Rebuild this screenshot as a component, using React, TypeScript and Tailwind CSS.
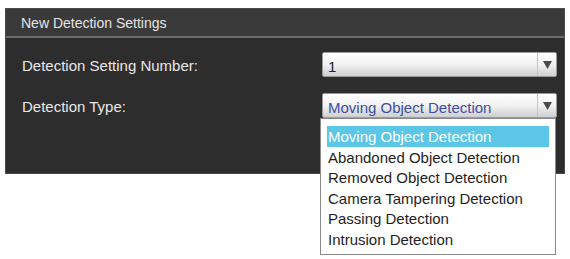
import React from "react";

const items = [
  "Moving Object Detection",
  "Abandoned Object Detection",
  "Removed Object Detection",
  "Camera Tampering Detection",
  "Passing Detection",
  "Intrusion Detection",
];

function Arrow() {
  return (
    <div className="w-[19px] h-full border-l border-[#c4c4c4] flex items-center justify-center">
      <svg width="9" height="9" viewBox="0 0 9 9">
        <polygon points="0,1 9,1 4.5,9" fill="#4a4a4a" />
      </svg>
    </div>
  );
}

function Select({ value, blue }: { value: string; blue?: boolean }) {
  return (
    <div className="w-[235px] h-[25px] flex items-center rounded-[2px] border border-[#9a9a9a] bg-gradient-to-b from-[#ffffff] via-[#f2f2f2] to-[#cfcfcf]">
      <div
        className={
          "flex-1 pl-[5px] pt-[3px] text-[15px] leading-none " +
          (blue ? "text-[#3d4f9e]" : "text-[#222222]")
        }
      >
        {value}
      </div>
      <Arrow />
    </div>
  );
}

export default function App() {
  return (
    <div
      className="w-[570px] h-[259px] bg-white overflow-hidden"
      style={{ fontFamily: '"Liberation Sans", Arial, sans-serif' }}
    >
      <div className="ml-[5px] pt-[8px]">
        <div className="w-[560px] h-[166px] bg-[#2d2d2d] border border-[#4a4a4a]">
          <div className="h-[29px] bg-[#3a3a3a] border-b-2 border-[#6c6c6c] pl-[15px] pt-[2px] flex items-center text-[14px] text-[#e4e4e4]">
            New Detection Settings
          </div>
          <div className="pl-[16px] pt-[14px] flex flex-col gap-[16px]">
            <div className="flex items-center h-[25px]">
              <div className="w-[300px] pt-[4px] text-[15px] text-[#e8e8e8]">
                Detection Setting Number:
              </div>
              <Select value="1" />
            </div>
            <div className="flex items-center h-[25px]">
              <div className="w-[300px] pt-[4px] text-[15px] text-[#e8e8e8]">
                Detection Type:
              </div>
              <div className="relative">
                <Select value="Moving Object Detection" blue />
                <div className="absolute left-[-2px] top-full w-[236px] h-[137px] bg-white border border-[#8a8a8a] pt-[7px] pl-[6px] pr-[6px] z-10">
                  {items.map((it, i) => (
                    <div
                      key={it}
                      className={
                        "h-[20.5px] flex items-center pl-[1px] pt-[2px] text-[15px] " +
                        (i === 0
                          ? "bg-[#5cc6e6] text-white"
                          : "text-[#1e1e1e]")
                      }
                    >
                      {it}
                    </div>
                  ))}
                </div>
              </div>
            </div>
          </div>
        </div>
      </div>
    </div>
  );
}
